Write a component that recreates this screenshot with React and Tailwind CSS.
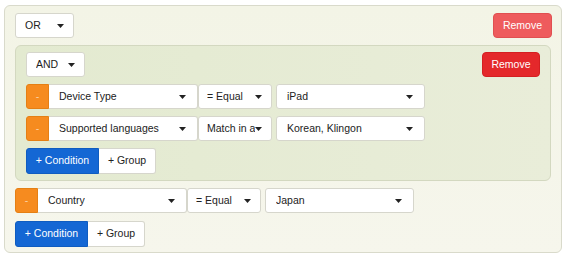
import React from "react";

const Caret = () => (
	<svg width="7" height="4" viewBox="0 0 7 4" className="shrink-0">
		<path d="M0 0 L7 0 L3.5 4 Z" fill="#222" />
	</svg>
);

const Select = ({ label, width, caretPad = "pr-[11px]", textPad = "pl-[10px]", className = "" }) => (
	<div
		className={`flex items-center justify-between h-full bg-white border border-[#d6d6cc] ${textPad} ${caretPad} ${className}`}
		style={{ width }}
	>
		<span className="whitespace-nowrap overflow-hidden">{label}</span>
		<Caret />
	</div>
);

const RuleRow = ({ field, op, value }) => (
	<div className="flex h-[25px]">
		<button className="w-[23px] h-full bg-[#f68b1f] text-white/60 rounded-l-[3px] border border-[#e57f14] text-[10.5px]">
			-
		</button>
		<Select label={field} width={149} className="border-l-0 rounded-r-[3px]" />
		<Select label={op} width={74} textPad="pl-[8px]" caretPad="pr-[9px]" className="rounded-[3px]" />
		<Select label={value} width={149} className="ml-[4px] rounded-[3px]" />
	</div>
);

const AddButtons = () => (
	<div className="flex h-[26px]">
		<button className="w-[73px] h-full bg-[#1467d4] text-white rounded-l-[3px] border border-[#0f5cc0]">
			+ Condition
		</button>
		<button className="w-[57px] h-full bg-white text-[#222] rounded-r-[3px] border border-l-0 border-[#d6d6cc]">
			+ Group
		</button>
	</div>
);

export default function App() {
	return (
		<div
			className="w-[568px] h-[259px] bg-white pt-[5px] pl-[4px] text-[10.5px] text-[#222]"
			style={{ fontFamily: "'Liberation Sans', Arial, sans-serif" }}
		>
			<div className="w-[558px] h-[248px] rounded-[6px] border border-[#d9dacb] bg-gradient-to-b from-[#f3f4e6] to-[#f6f6ec] pt-[7px] px-[10px] pb-[5px]">
				{/* top group */}
				<div className="flex items-center justify-between h-[25px]">
					<Select label="OR" width={59} textPad="pl-[9px]" caretPad="pr-[9px]" className="rounded-[3px]" />
					<button className="w-[59px] h-[25px] mr-[-1px] rounded-[4px] bg-[#ee5b5d] border border-[#e04f51] text-white">
						Remove
					</button>
				</div>

				{/* nested group */}
				<div className="mt-[7px] rounded-[6px] border border-[#d3d8c0] bg-gradient-to-r from-[#e3ead0] to-[#e9edd9] pt-[6px] px-[10px] pb-[6px]">
					<div className="flex items-center justify-between h-[25px]">
						<Select label="AND" width={59} textPad="pl-[9px]" caretPad="pr-[9px]" className="rounded-[3px]" />
						<button className="w-[58px] h-[25px] rounded-[4px] bg-[#e4282b] border border-[#d41f22] text-white">
							Remove
						</button>
					</div>
					<div className="mt-[7px]">
						<RuleRow field="Device Type" op="= Equal" value="iPad" />
					</div>
					<div className="mt-[7px]">
						<RuleRow field="Supported languages" op="Match in a" value="Korean, Klingon" />
					</div>
					<div className="mt-[7px]">
						<AddButtons />
					</div>
				</div>

				<div className="mt-[7px]">
					<RuleRow field="Country" op="= Equal" value="Japan" />
				</div>
				<div className="mt-[8px]">
					<AddButtons />
				</div>
			</div>
		</div>
	);
}
